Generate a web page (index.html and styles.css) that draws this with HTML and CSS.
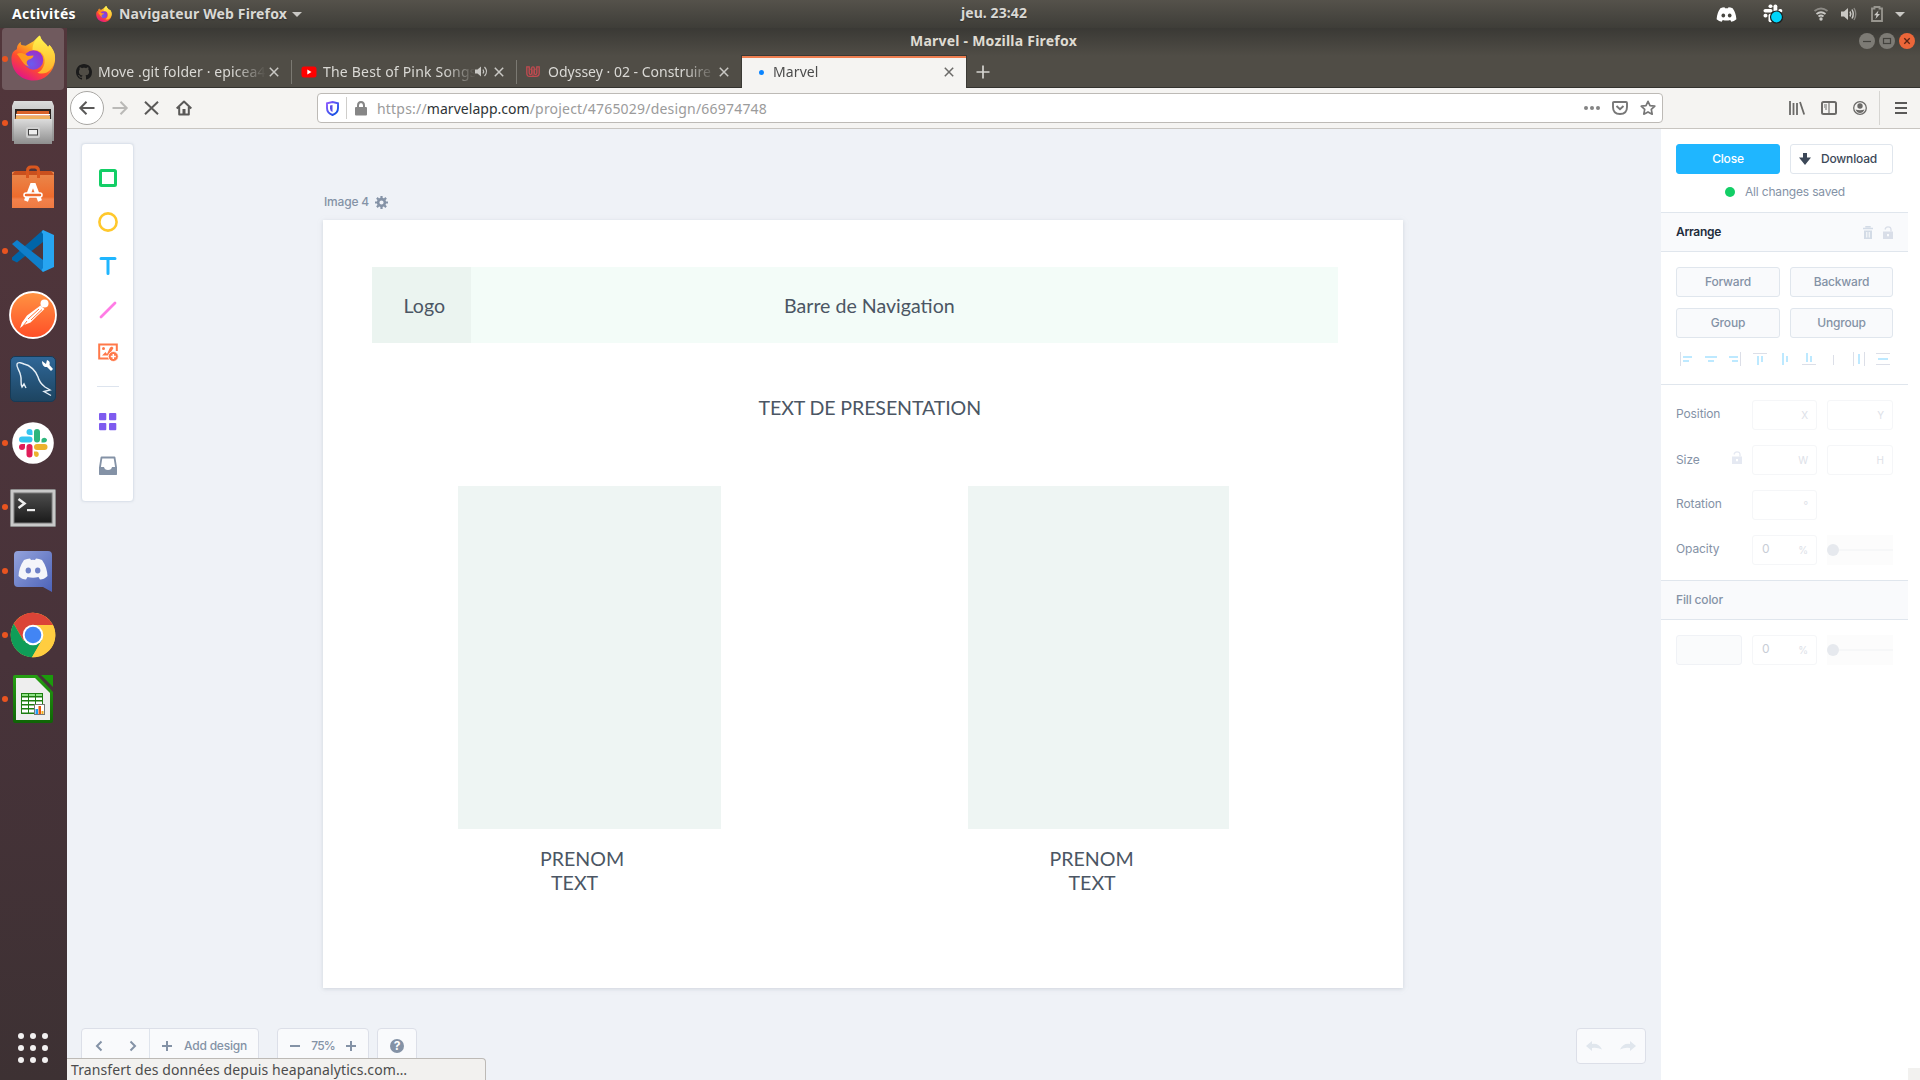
FILE: index.html
```html
<!DOCTYPE html>
<html lang="fr">
<head>
<meta charset="utf-8">
<title>Marvel</title>
<link rel="stylesheet" href="styles.css">
</head>
<body>
<svg class="defs" width="0" height="0">
  <defs>
    <linearGradient id="ffBody" x1=".85" y1=".1" x2=".3" y2="1"><stop offset="0" stop-color="#fff44f"/><stop offset=".35" stop-color="#ffa521"/><stop offset=".65" stop-color="#ff4a2f"/><stop offset="1" stop-color="#e0148a"/></linearGradient>
    <linearGradient id="ffFlame" x1=".5" y1="0" x2=".5" y2="1"><stop offset="0" stop-color="#fff44f"/><stop offset="1" stop-color="#ffb02a"/></linearGradient>
    <radialGradient id="ffGlobe" cx=".4" cy=".7" r=".7"><stop offset="0" stop-color="#6a5bf0"/><stop offset="1" stop-color="#9b30c8"/></radialGradient>
    <linearGradient id="metal" x1="0" y1="0" x2="0" y2="1"><stop offset="0" stop-color="#dcdcdc"/><stop offset="1" stop-color="#8e8e8e"/></linearGradient>
    <linearGradient id="bag" x1="0" y1="0" x2="0" y2="1"><stop offset="0" stop-color="#e98a4e"/><stop offset=".7" stop-color="#ee6b2d"/><stop offset=".76" stop-color="#f3814b"/><stop offset="1" stop-color="#ef7a42"/></linearGradient>
    <linearGradient id="pm" x1="0" y1="0" x2="0" y2="1"><stop offset="0" stop-color="#ff9443"/><stop offset="1" stop-color="#ff4e27"/></linearGradient>
    <linearGradient id="my" x1="0" y1="0" x2="0" y2="1"><stop offset="0" stop-color="#2f6798"/><stop offset="1" stop-color="#1d4460"/></linearGradient>
    <linearGradient id="term" x1="0" y1="0" x2="0" y2="1"><stop offset="0" stop-color="#4c4c4c"/><stop offset="1" stop-color="#1b1b1b"/></linearGradient>
    <linearGradient id="disc" x1="0" y1="0" x2="1" y2="1"><stop offset="0" stop-color="#94a3dc"/><stop offset="1" stop-color="#4c62b8"/></linearGradient>
    <linearGradient id="calc" x1="0" y1="0" x2="0" y2="1"><stop offset="0" stop-color="#26a013"/><stop offset="1" stop-color="#0f6406"/></linearGradient>
    <linearGradient id="shield" x1="0" y1="0" x2="1" y2="1"><stop offset="0" stop-color="#9059ff"/><stop offset="1" stop-color="#0250e0"/></linearGradient>
    <symbol id="firefox" viewBox="0 0 46 46">
      <path d="M6 14C6 11 7 9 10 6.500C9.500 9 10.500 10 12 10L15 10.500L23 6L28 1C29 0 29.500 0 30 1C31 6 36 8 38 12C38.500 10.500 39 10 39.500 10C44 15 45.500 20 45 25C44 38 34 46 23 46C10 46 .5 36 .5 24C.5 19 2 15.500 6 14Z" fill="url(#ffBody)"/>
      <path d="M22 15C22 8 25 4 29.500 0C31 6 36 8 38 12C38.500 10.500 39 10 39.500 10C44 15 45.500 20 45 25C43 36 35 41 27 38C36 34 37 20 29 16C26 14 24 16 22 15Z" fill="url(#ffFlame)"/>
      <circle cx="23" cy="25" r="10" fill="url(#ffGlobe)"/>
      <path d="M6 19C9 17 14 18 17 21L23 20.500C23 23 20 24 17.500 25C15 27 16 30 19 32C12 31 11 24 6 19Z" fill="#ff9a1e"/>
    </symbol>
    <symbol id="discordFace" viewBox="0 0 30 22">
      <path d="M6 2Q9 .5 12 .5L13 2Q15 1.700 17 2L18 .5Q21 .5 24 2Q29 9 29.500 18Q26 21.500 22 21.500L20.500 19Q15 20.500 9.500 19L8 21.500Q4 21.500.5 18Q1 9 6 2Z" fill="currentColor"/>
      <g fill="var(--eye)"><ellipse cx="10.300" cy="12.500" rx="2.700" ry="2.900"/><ellipse cx="19.700" cy="12.500" rx="2.700" ry="2.900"/></g>
    </symbol>
    <symbol id="x" viewBox="0 0 10 10"><path d="M.8.8L9.200 9.200M9.200.8L.8 9.200" stroke="currentColor" stroke-width="1.500" fill="none"/></symbol>
    <symbol id="lockOpen" viewBox="0 0 10 13"><path d="M2 3.500C2.500 1.500 3.500.8 5 .8C7 .8 8 2 8 3.500V5.500" fill="none" stroke="currentColor" stroke-width="1.300"/><path fill-rule="evenodd" d="M0 5.500H10V13H0ZM4 8V10.200H6V8Z" fill="currentColor"/></symbol>
  </defs>
</svg>

<header class="topbar">
  <span class="activities">Activités</span>
  <svg class="app-icon" width="16" height="16"><use href="#firefox"/></svg>
  <span class="app-name">Navigateur Web Firefox</span>
  <svg class="caret" width="10" height="5"><path d="M0 0H10L5 5Z" fill="#c9c8c4"/></svg>
  <span class="clock">jeu. 23:42</span>
  <div class="tray">
    <svg class="tray-discord" width="21" height="15"><use href="#discordFace"/></svg>
    <svg width="20" height="20" viewBox="0 0 20 20"><g fill="#fff"><rect x="5.500" y=".5" width="4" height="3.500" rx="1.700"/><rect x="5.500" y="9.800" width="3.800" height="8.500" rx="1.800"/><rect x=".5" y="5" width="9" height="3.600" rx="1.800"/><rect x="10.500" y=".5" width="3.800" height="8" rx="1.800"/><rect x="15.300" y="5" width="4" height="3.600" rx="1.700"/><rect x=".5" y="9.800" width="4" height="3.600" rx="1.700"/></g><circle cx="13.500" cy="13" r="6" fill="#00d4fa" stroke="#1c1c1c" stroke-width="1.200"/></svg>
    <svg class="wifi" width="14" height="14" viewBox="0 0 14 14" fill="none" stroke="#c9c8c4" stroke-width="1.800"><path d="M.5 4Q7-1 13.500 4" opacity=".5"/><path d="M2.500 7Q7 3.500 11.500 7M4.500 9.500Q7 7.500 9.500 9.500"/><circle cx="7" cy="12" r="1.700" fill="#c9c8c4" stroke="none"/></svg>
    <svg class="vol" width="16" height="14" viewBox="0 0 16 14"><path d="M0 4.500H3L7 1V13L3 9.500H0Z" fill="#c9c8c4"/><path d="M9 4.500Q10.500 7 9 9.500M11 2.500Q13.500 7 11 11.500" fill="none" stroke="#c9c8c4" stroke-width="1.500"/><path d="M13 1Q16.500 7 13 13" fill="none" stroke="#c9c8c4" stroke-width="1.400" opacity=".5"/></svg>
    <svg class="batt" width="12" height="16" viewBox="0 0 12 16"><path d="M3.500 2.500V1H8.500V2.500H11V15H1V2.500Z" fill="none" stroke="#98968f" stroke-width="1.800"/><path d="M7.500 4.500L3 9.300H5.500L4.500 13L9 8H6.500Z" fill="#c9c8c4"/></svg>
    <svg class="down" width="10" height="5"><path d="M0 0H10L5 5Z" fill="#c9c8c4"/></svg>
  </div>
</header>

<div class="desktop">
  <nav class="dock">
    <div class="slot active running"><svg width="45" height="46"><use href="#firefox"/></svg></div>
    <div class="slot running"><svg width="42" height="44" viewBox="0 0 42 44"><path d="M2 0H40L42 5V40H0V5Z" fill="url(#metal)"/><rect x="3" y="8" width="36" height="14" fill="#2b2320"/><path d="M5 10H37V20H3Z" fill="#d9622a"/><rect x="4" y="13" width="34" height="1.500" fill="#fff"/><rect x="4" y="15" width="34" height="3" fill="#f0b060"/><path d="M2 18H40V43H2Z" fill="url(#metal)"/><rect x="14" y="26" width="14" height="11" rx="2" fill="#cfcfcf"/><rect x="16.500" y="28.500" width="9" height="5.500" fill="#eee" stroke="#444"/></svg></div>
    <div class="slot"><svg width="42" height="44" viewBox="0 0 42 44"><path d="M0 7L4 6V10H38V6L42 7V43H0Z" fill="url(#bag)"/><path d="M0 10L3 6H39L42 10Z" fill="#c9501e"/><path d="M15.500 13V6Q15.500 2 19 2H23Q26.500 2 26.500 6V13" fill="none" stroke="#d9571f" stroke-width="3"/><path d="M14 36L20 20H22L28 36" fill="none" stroke="#fff" stroke-width="4.200"/><rect x="12" y="28" width="18" height="4" rx="2" fill="#ef6b2d" stroke="#fff" stroke-width="1.500"/></svg></div>
    <div class="slot running"><svg width="42" height="42" viewBox="0 0 42 42"><path d="M0 27.500L31 0V12L5 32.500L0 30Z" fill="#0065a9"/><path d="M0 14L5 10L31 30V42Z" fill="#0f7fcb"/><path d="M31 0L42 5V37L31 42L29.500 40L31 38V4L29.500 2Z" fill="#27a5f1"/></svg></div>
    <div class="slot"><svg width="48" height="48" viewBox="0 0 48 48"><circle cx="24" cy="24" r="23" fill="url(#pm)" stroke="#fff" stroke-width="1.800"/><circle cx="35.500" cy="12.500" r="4" fill="#fff"/><path d="M31.500 14.500L35.500 18L28 25L21.500 31.500L15 34L11 37L13 31.500L18 24.500Z" fill="#fff"/><path d="M30 18L19 28M33 18.500L22 29M18 30L14 35" stroke="#ff7339" stroke-width="1"/></svg></div>
    <div class="slot"><svg width="46" height="46" viewBox="0 0 46 46"><rect x=".5" y=".5" width="45" height="45" rx="4.500" fill="url(#my)" stroke="#173a56"/><path d="M16 32L14 28L12 31C10 27 12 24 10.500 19C9.500 14 6 11 7 8C8 5.500 12 7 14 8C20 9 26 15 28 21C29 25 31 28 35 31L40 34L34 35.500L41 39.500" fill="none" stroke="#e6eff6" stroke-width="1.400"/><path d="M32 5L36 8L37 4C40 5 40 7 39.500 9L43 13L41 15L37 11C34 11.500 32 9 32 5Z" fill="#fff"/></svg></div>
    <div class="slot running"><svg width="42" height="42" viewBox="0 0 42 42"><circle cx="21" cy="21" r="20.800" fill="#fff"/><g fill="#36c5f0"><path d="M17.500 7A3 3 0 0 0 17.500 13H20.500V10A3 3 0 0 0 17.500 7Z"/><rect x="7" y="14.500" width="13.500" height="6" rx="3"/></g><g fill="#2eb67d"><rect x="22" y="7" width="6" height="13.500" rx="3"/><path d="M35 17.500A3 3 0 0 0 29.500 17.500V20.500H32A3 3 0 0 0 35 17.500Z"/></g><g fill="#ecb22e"><rect x="22" y="22" width="13.500" height="6" rx="3"/><path d="M25 35A3 3 0 0 0 25 29.500H22V32A3 3 0 0 0 25 35Z"/></g><g fill="#e01e5a"><rect x="14.500" y="22" width="6" height="13.500" rx="3"/><path d="M7 25A3 3 0 0 0 13 25V22H10A3 3 0 0 0 7 25Z"/></g></svg></div>
    <div class="slot running term"><svg width="46" height="38" viewBox="0 0 46 38"><rect width="46" height="38" rx="1.500" fill="#8d8d8d"/><rect x="1" y="1" width="44" height="36" fill="#c9c9c9"/><rect x="3.500" y="3.500" width="39" height="31" fill="#777"/><rect x="4.500" y="4.500" width="37" height="29" fill="url(#term)"/><path d="M8.500 10L14.500 14.500L8.500 19" fill="none" stroke="#eee" stroke-width="2.500"/><rect x="17" y="20" width="8" height="2.200" fill="#eee"/></svg></div>
    <div class="slot running"><svg width="38" height="41" viewBox="0 0 38 41"><path d="M4 0H34Q38 0 38 4V41L29 36H4Q0 36 0 32V4Q0 0 4 0Z" fill="url(#disc)"/><svg class="dock-face" x="4" y="7" width="30" height="22"><use href="#discordFace"/></svg></svg></div>
    <div class="slot running"><svg width="46" height="46" viewBox="0 0 46 46"><circle cx="23" cy="23" r="22.300" fill="#ffcd40"/><path d="M3.700 11.800A22.300 22.300 0 0 1 43 13H23L13.400 28.500Z" fill="#db4437"/><path d="M3.700 11.800A22.300 22.300 0 0 0 22 45.300L32 28L13.400 28.500Z" fill="#0f9d58"/><path d="M32 28L22 45.300A22.300 22.300 0 0 0 43 13H23Z" fill="#ffcd40"/><circle cx="23" cy="23" r="10.300" fill="#fff"/><circle cx="23" cy="23" r="8.300" fill="#4285f4"/></svg></div>
    <div class="slot running"><svg width="40" height="48" viewBox="0 0 40 48"><path d="M0 2Q0 0 2 0H24L40 17V46Q40 48 38 48H2Q0 48 0 46Z" fill="url(#calc)"/><path d="M28 0H40V12Z" fill="#1b9a0c"/><path d="M3 3H22L37 18V45H3Z" fill="#eee"/><rect x="8" y="18" width="22" height="21" fill="#1d7d10"/><g fill="#8fe386"><path d="M9 19H15V21H9ZM16 19H22V21H16ZM23 19H29V21H23Z"/></g><g fill="#fff"><path d="M9 22.500H15V25H9ZM16 22.500H22V25H16ZM23 22.500H29V25H23ZM9 26.500H15V29H9ZM16 26.500H22V29H16ZM23 26.500H29V29H23ZM9 30.500H15V33H9ZM16 30.500H22V33H16ZM9 34.500H15V37.500H9ZM16 34.500H22V37.500H16Z"/></g><rect x="21.500" y="29.500" width="10" height="10" fill="#fff" stroke="#777"/><rect x="22.500" y="34" width="2.500" height="5" fill="#1d99f3"/><rect x="25.500" y="31" width="2.500" height="8" fill="#e8590c"/><rect x="28.500" y="36" width="2" height="3" fill="#f0b020"/></svg></div>
    <svg class="apps" width="30" height="30" fill="#f3f1f1"><circle cx="3" cy="3" r="3"/><circle cx="15" cy="3" r="3"/><circle cx="27" cy="3" r="3"/><circle cx="3" cy="15" r="3"/><circle cx="15" cy="15" r="3"/><circle cx="27" cy="15" r="3"/><circle cx="3" cy="27" r="3"/><circle cx="15" cy="27" r="3"/><circle cx="27" cy="27" r="3"/></svg>
  </nav>

  <div class="window">
    <div class="titlebar">
      <span>Marvel - Mozilla Firefox</span>
      <div class="winbtns">
        <svg width="16" height="16"><circle cx="8" cy="8" r="8" fill="#7d7b75"/><path d="M4 8.500H12" stroke="#43423d" stroke-width="1.200"/></svg>
        <svg width="16" height="16"><circle cx="8" cy="8" r="8" fill="#7d7b75"/><rect x="4.500" y="5.500" width="7" height="5" fill="none" stroke="#43423d" stroke-width="1.200"/></svg>
        <svg width="16" height="16"><circle cx="8" cy="8" r="8" fill="#ec6639"/><path d="M5.300 5.300L10.700 10.700M10.700 5.300L5.300 10.700" stroke="#5a2414" stroke-width="1.300"/></svg>
      </div>
    </div>

    <div class="tabs">
      <div class="tab">
        <svg width="16" height="16" viewBox="0 0 16 16"><path fill="#1b1b1b" d="M8 0C3.580 0 0 3.580 0 8c0 3.540 2.290 6.530 5.470 7.590.4.070.55-.17.55-.38 0-.19-.01-.82-.01-1.490-2.010.37-2.530-.49-2.690-.94-.09-.23-.48-.94-.82-1.130-.28-.15-.68-.52-.01-.53.63-.01 1.080.58 1.230.82.72 1.210 1.870.87 2.330.66.07-.52.28-.87.51-1.070-1.780-.2-3.640-.89-3.640-3.950 0-.87.31-1.590.82-2.150-.08-.2-.36-1.020.08-2.120 0 0 .67-.21 2.200.82.64-.18 1.320-.27 2-.27s1.360.09 2 .27c1.530-1.040 2.200-.82 2.200-.82.44 1.100.16 1.920.08 2.120.51.56.82 1.270.82 2.150 0 3.070-1.870 3.750-3.650 3.950.29.25.54.73.54 1.480 0 1.070-.01 1.930-.01 2.200 0 .21.15.46.55.38A8.010 8.010 0 0 0 16 8c0-4.420-3.580-8-8-8z"/></svg>
        <span class="label">Move .git folder · epicea4</span>
        <svg class="x" width="10" height="10"><use href="#x"/></svg>
      </div>
      <div class="tab">
        <svg width="16" height="16" viewBox="0 0 16 16"><rect x=".5" y="2.500" width="15" height="11" rx="2.500" fill="#f00"/><path d="M6.300 5.500L10.500 8L6.300 10.500Z" fill="#fff"/></svg>
        <span class="label t-yt">The Best of Pink Songs</span>
        <svg class="sound" width="13" height="11" viewBox="0 0 13 11"><path d="M0 3.500H2.500L6 .5V10.500L2.500 7.500H0Z" fill="#c9c8c4"/><path d="M8 3.500Q9.300 5.500 8 7.500M9.500 1Q13.500 5.500 9.500 10" fill="none" stroke="#c9c8c4" stroke-width="1.200"/></svg>
        <svg class="x" width="10" height="10"><use href="#x"/></svg>
      </div>
      <div class="tab odyssey">
        <svg width="14" height="11" viewBox="0 0 14 11" fill="none" stroke="#c24a50" stroke-width="1.300"><path d="M.8.8H3.200V7Q3.200 8.500 4.500 8.500Q5.700 8.500 5.700 7V2.200Q5.700.8 7 .8Q8.300.8 8.300 2.200V7Q8.300 8.500 9.500 8.500Q10.800 8.500 10.800 7V.8H13.200V7Q13.200 10.400 10 10.400H3.500Q.8 10.400.8 7Z"/><path d="M7 3.500V10M3.200 2.500L5.700 4M8.300 4L10.800 2.500" opacity=".7"/></svg>
        <span class="label t-ody">Odyssey · 02 - Construire</span>
        <svg class="x" width="10" height="10"><use href="#x"/></svg>
      </div>
      <div class="tab current">
        <i class="dot"></i>
        <span class="label">Marvel</span>
        <svg class="x" width="10" height="10"><use href="#x"/></svg>
      </div>
      <svg class="plus" width="14" height="14"><path d="M7 .5V13.500M.5 7H13.500" stroke="#d5d4d0" stroke-width="1.700"/></svg>
    </div>

    <div class="toolbar">
      <span class="back"><svg width="16" height="14" viewBox="0 0 16 14"><path d="M15.500 7H1.500M7.500 .8L1.300 7L7.500 13.200" fill="none" stroke="#5a5958" stroke-width="2"/></svg></span>
      <svg class="fwd" width="16" height="14" viewBox="0 0 16 14"><path d="M.5 7H14.500M8.500 .8L14.700 7L8.500 13.200" fill="none" stroke="#bab9b7" stroke-width="2"/></svg>
      <svg class="stop" width="15" height="14" viewBox="0 0 15 14"><path d="M1 .8L14 13.200M14 .8L1 13.200" stroke="#5a5958" stroke-width="2"/></svg>
      <svg class="home" width="16" height="16" viewBox="0 0 16 16"><path d="M.7 8.500L8 1.500L15.300 8.500M3.200 7V14.500H12.800V7" fill="none" stroke="#5a5958" stroke-width="2" stroke-linejoin="round"/><path d="M6.500 9H9.500V14H6.500Z" fill="#5a5958"/></svg>
      <div class="urlbar">
        <svg width="13" height="15" viewBox="0 0 13 15"><path d="M6.500 1L12 2.200V7Q12 12 6.500 14Q1 12 1 7V2.200Z" fill="none" stroke="url(#shield)" stroke-width="1.900"/><path d="M6.500 4L4 4.500V7.500Q4 10 6.500 11Z" fill="#5a4fe8"/></svg>
        <i class="vr"></i>
        <svg class="lock" width="12" height="15" viewBox="0 0 12 15"><path d="M3 7V4.500Q3 1 6 1Q9 1 9 4.500V7" fill="none" stroke="#868686" stroke-width="2"/><rect y="6" width="12" height="8.500" rx="1" fill="#868686"/></svg>
        <span class="url">https://<b>marvelapp.com</b>/project/4765029/design/66974748</span>
        <svg class="dots" width="16" height="4" fill="#848484"><circle cx="2" cy="2" r="2"/><circle cx="8" cy="2" r="2"/><circle cx="14" cy="2" r="2"/></svg>
        <svg class="pocket" width="16" height="14" viewBox="0 0 16 14"><path d="M2 1H14Q15 1 15 2V6Q15 13 8 13Q1 13 1 6V2Q1 1 2 1Z" fill="none" stroke="#777" stroke-width="1.900"/><path d="M4.500 5L8 8.300L11.500 5" fill="none" stroke="#777" stroke-width="1.900"/></svg>
        <svg width="16" height="16" viewBox="0 0 16 16"><path d="M8 1.300L10 5.600L14.800 6.200L11.300 9.400L12.200 14.200L8 11.900L3.800 14.200L4.700 9.400L1.200 6.200L6 5.600Z" fill="none" stroke="#777" stroke-width="1.700" stroke-linejoin="round"/></svg>
      </div>
      <div class="tools">
        <svg width="16" height="14" viewBox="0 0 16 14" stroke="#6b6a68" stroke-width="1.800"><path d="M1 0V14M4.500 2V14M8 2V14M11 1L15.200 13.500"/></svg>
        <svg width="16" height="14" viewBox="0 0 16 14"><rect x="1" y="1" width="14" height="12" rx="1.500" fill="none" stroke="#6b6a68" stroke-width="2"/><path d="M8 1V13M3 4H6M3 6H6M4 8H6" stroke="#6b6a68" stroke-width="1.100"/></svg>
        <svg width="14" height="14" viewBox="0 0 14 14"><circle cx="7" cy="7" r="6.300" fill="none" stroke="#6b6a68" stroke-width="1.300"/><circle cx="7" cy="5" r="2.700" fill="#6b6a68"/><path d="M2.500 8.500Q7 10 11.500 8.500Q10 12 7 12Q4 12 2.500 8.500Z" fill="#6b6a68"/></svg>
        <i class="vr"></i>
        <svg width="12" height="12"><path d="M0 1H12M0 6H12M0 11H12" stroke="#5a5958" stroke-width="2"/></svg>
      </div>
    </div>

    <div class="app">
      <main class="stage">
        <div class="toolbox">
          <svg width="20" height="20"><rect x="2.500" y="2.500" width="15" height="15" rx="1" fill="none" stroke="#13ce66" stroke-width="3"/></svg>
          <svg width="20" height="20"><circle cx="10" cy="10" r="8.600" fill="none" stroke="#ffc82c" stroke-width="2.600"/></svg>
          <svg width="20" height="20"><path d="M3 2.500H17M10 2.500V17.500" fill="none" stroke="#1fb6ff" stroke-width="3" stroke-linecap="round"/></svg>
          <svg width="20" height="20"><path d="M3 17L17 3" stroke="#ff7ce5" stroke-width="2.800" stroke-linecap="round"/></svg>
          <svg class="pic" width="20" height="20"><path d="M11 16.500H1.200V2.500H18.800V9" fill="none" stroke="#ff7849" stroke-width="2"/><path d="M4 13.500L7.500 10L9 12L12 5.500L14 4.500L15.500 6L11 13.500Z" fill="#ff7849"/><circle cx="5.500" cy="6.500" r="1.500" fill="#ff7849"/><circle cx="15.300" cy="14.500" r="5" fill="#ff7849" stroke="#fff" stroke-width=".8"/><path d="M15.300 12V17M12.800 14.500H17.800" stroke="#fff" stroke-width="1.500"/></svg>
          <i class="hr"></i>
          <svg width="20" height="20" fill="#7e5bef"><rect x="1" y="2" width="7.300" height="7.300" rx="1"/><rect x="11" y="2" width="7.300" height="7.300" rx="1"/><rect x="1" y="12" width="7.300" height="7.300" rx="1"/><rect x="11" y="12" width="7.300" height="7.300" rx="1"/></svg>
          <svg class="inbox" width="20" height="20"><path d="M3.500 1.500H16.500L18 11V18H2V11Z" fill="none" stroke="#8492a6" stroke-width="1.800" stroke-linejoin="round"/><path d="M1 11H6Q6.500 14 10 14Q13.500 14 14 11H19V17.500Q19 19 17.500 19H2.500Q1 19 1 17.500Z" fill="#8492a6"/></svg>
        </div>

        <div class="artlabel">Image 4
          <svg width="13" height="13" viewBox="0 0 13 13"><circle cx="6.500" cy="6.500" r="3.400" fill="none" stroke="#8492a6" stroke-width="2.600"/><g stroke="#8492a6" stroke-width="2.200"><path d="M6.500 0V2.500M6.500 10.500V13M0 6.500H2.500M10.500 6.500H13M1.900 1.900L3.500 3.500M9.500 9.500L11.100 11.100M11.100 1.900L9.500 3.500M3.500 9.500L1.900 11.100"/></g></svg>
        </div>
        <div class="artboard">
          <div class="shape nav"></div>
          <div class="shape logo"></div>
          <div class="shape card-a"></div>
          <div class="shape card-b"></div>
          <span class="txt t1">Logo</span>
          <span class="txt t2">Barre de Navigation</span>
          <span class="txt t3">TEXT DE PRESENTATION</span>
          <span class="txt t4">PRENOM</span>
          <span class="txt t5">TEXT</span>
          <span class="txt t6">PRENOM</span>
          <span class="txt t7">TEXT</span>
        </div>

        <div class="bottombar">
          <div class="group pages">
            <div class="arrows">
              <svg width="8" height="12"><path d="M6.500 1.500L2 6L6.500 10.500" fill="none" stroke="#8492a6" stroke-width="2"/></svg>
              <svg width="8" height="12"><path d="M1.500 1.500L6 6L1.500 10.500" fill="none" stroke="#8492a6" stroke-width="2"/></svg>
            </div>
            <div class="add"><svg width="10" height="10"><path d="M5 0V10M0 5H10" stroke="#8492a6" stroke-width="2"/></svg><span>Add design</span></div>
          </div>
          <div class="group zoom">
            <svg width="10" height="10"><path d="M0 5H10" stroke="#8492a6" stroke-width="2"/></svg>
            <span>75%</span>
            <svg width="10" height="10"><path d="M5 0V10M0 5H10" stroke="#8492a6" stroke-width="2"/></svg>
          </div>
          <div class="group help"><span class="q">?</span></div>
          <div class="group undo">
            <svg width="16" height="10"><path d="M0 5L6 0V3Q13 2 16 8.500Q11 6 6 7V10Z" fill="#e0e6ed"/></svg>
            <svg width="16" height="10"><path d="M16 5L10 0V3Q3 2 0 8.500Q5 6 10 7V10Z" fill="#e0e6ed"/></svg>
          </div>
        </div>
      </main>

      <aside class="panel">
        <div class="inner">
          <section class="actions">
            <button class="close">Close</button>
            <button class="download"><svg width="12" height="12"><path d="M4 0H8V4.500H12L6 12L0 4.500H4Z" fill="#3c4858"/></svg>Download</button>
            <p class="saved"><i></i>All changes saved</p>
          </section>
          <h2 class="dark">Arrange
            <svg width="10" height="13" viewBox="0 0 10 13"><path d="M3 1.500V.7H7V1.500M0 2.500H10" fill="none" stroke="#d3dbe6" stroke-width="1.400"/><path fill-rule="evenodd" d="M1 4.500H9V13H1ZM3.200 6V11.500H4.300V6ZM5.700 6V11.500H6.800V6Z" fill="#d3dbe6"/></svg>
            <svg class="lk" width="10" height="13"><use href="#lockOpen"/></svg>
          </h2>
          <section class="order">
            <button>Forward</button><button>Backward</button>
            <button>Group</button><button>Ungroup</button>
            <svg class="align" width="217" height="18">
              <path fill="#bde9ff" d="M7 6h9v2h-9zM7 10h6v2h-6zM29 6h12v2h-12zM32 10h6v2h-6zM53 6h9v2h-9zM56 10h6v2h-6zM81 6h2v9h-2zM85 6h2v6h-2zM106 3h2v12h-2zM110 6h2v6h-2zM130 3h2v9h-2zM134 6h2v6h-2zM182 4h2v10h-2zM202 8h10v2h-10z"/>
              <path fill="#dcdfe8" d="M4 2h1v14h-1zM64 2h1v14h-1zM77 3h14v1h-14zM126 14h14v1h-14zM157 5h1v10h-1zM177 2h1v14h-1zM188 2h1v14h-1zM200 3h14v1h-14zM200 14h14v1h-14z"/>
            </svg>
          </section>
          <section class="fields">
            <div class="row"><label>Position</label><div class="in"><em>X</em></div><div class="in"><em>Y</em></div></div>
            <div class="row"><label class="size">Size</label><svg class="lk" width="10" height="13"><use href="#lockOpen"/></svg><div class="in"><em>W</em></div><div class="in"><em>H</em></div></div>
            <div class="row"><label>Rotation</label><div class="in"><em>°</em></div></div>
            <div class="row"><label>Opacity</label><div class="in"><span>0</span><em>%</em></div><div class="slider"></div></div>
          </section>
          <h2>Fill color</h2>
          <section class="fill"><div class="swatch"></div><div class="in"><span>0</span><em>%</em></div><div class="slider"></div></section>
        </div>
        <i class="corner"></i>
      </aside>
      <div class="status">Transfert des données depuis heapanalytics.com…</div>
    </div>
  </div>
</div>
</body>
</html>
```
FILE: styles.css
```css
* { box-sizing: border-box; }
body {
  margin: 0;
  width: 1920px;
  height: 1080px;
  overflow: hidden;
  display: flex;
  flex-direction: column;
  font: 14px/20px "Noto Sans", sans-serif;
}
svg { display: block; flex: none; overflow: visible; }
.defs { position: absolute; }
button, h2, p { margin: 0; font: inherit; }

/* system bar */
.topbar {
  position: relative;
  flex: none;
  height: 28px;
  display: flex;
  align-items: center;
  padding: 0 13px 0 12px;
  background: linear-gradient(#55524b, #3e3d38);
  color: #d9d8d4;
  font-weight: 700;
  text-shadow: 0 1px 1px #2228;
}
.activities { width: 84px; color: #fff; letter-spacing: .35px; }
.app-name { margin-left: 7px; letter-spacing: .14px; }
.caret { margin-left: 5px; }
.clock { position: absolute; left: 961px; top: 3px; letter-spacing: .08px; }
.tray { margin-left: auto; display: flex; align-items: center; }
.tray-discord { color: #fff; margin-right: 26px; --eye: #47453f; }
.wifi { margin-left: 31px; }
.vol { margin-left: 13px; }
.batt { margin-left: 14px; }
.down { margin-left: 12px; margin-right: 2px; }

.desktop { flex: 1; display: flex; min-height: 0; }

/* dock */
.dock {
  width: 67px;
  display: flex;
  flex-direction: column;
  align-items: center;
  padding-right: 1px;
  background: linear-gradient(#52363b, #48333a 60%, #3d3133);
}
.slot {
  position: relative;
  width: 62px;
  height: 62px;
  margin-bottom: 2px;
  flex: none;
  display: flex;
  align-items: center;
  justify-content: center;
  border-radius: 4px;
}
.slot.active { background: #705a5e; padding-bottom: 2px; }
.slot.term { padding-top: 2px; }
.slot.running::before {
  content: "";
  position: absolute;
  left: 0;
  top: 28px;
  width: 6px;
  height: 6px;
  border-radius: 50%;
  background: #e95420;
}
.dock-face { color: #f4f5fa; --eye: #6f82c8; }
.apps { margin: auto 0 17px; }

/* window chrome */
.window { flex: 1; display: flex; flex-direction: column; min-width: 0; }
.titlebar {
  height: 28px;
  display: flex;
  align-items: center;
  padding: 0 5px 2px 843px;
  background: linear-gradient(#3a3935, #504d46);
  color: #dfdbd2;
  font-weight: 700;
  letter-spacing: .225px;
}
.winbtns { margin-left: auto; display: flex; gap: 4px; }

.tabs {
  height: 32px;
  display: flex;
  background: #504d46;
  border-bottom: 1px solid #33322e;
  color: #dad9d5;
}
.tab {
  width: 225px;
  height: 31px;
  display: flex;
  align-items: center;
  padding: 1px 13px 1px 9px;
  position: relative;
}
.tab:not(.current)::after {
  content: "";
  position: absolute;
  right: 0;
  top: 4px;
  width: 1px;
  height: 24px;
  background: #7b7972;
}
.tab.odyssey::after { display: none; }
.tab .label {
  flex: 1;
  min-width: 0;
  margin-left: 6px;
  white-space: nowrap;
  letter-spacing: .1px;
  -webkit-mask-image: linear-gradient(90deg, #000 calc(100% - 32px), transparent);
  mask-image: linear-gradient(90deg, #000 calc(100% - 32px), transparent);
}
.tab .label.t-yt { letter-spacing: .2px; }
.tab .label.t-ody { margin-left: 8px; letter-spacing: 0; }
.tab .x { margin-left: 3px; color: #c9c8c4; }
.tab .sound { margin-left: -1px; }
.tab .sound + .x { margin-left: 6px; }
.tab.current {
  width: 224px;
  height: 32px;
  background: #f5f4f2;
  border-top: 2px solid #ee7e50;
  color: #4c4c4c;
  padding: 0 12px 2px 17px;
  box-shadow: 0 0 0 1px #3a3934;
  clip-path: inset(-1px -1px 0 -1px);
}
.tab.current .x { color: #6b6a68; }
.tab.current .label { margin-left: 9px; }
.dot { width: 5px; height: 5px; border-radius: 50%; background: #0a84ff; }
.plus { margin: 9px 0 0 10px; }

.toolbar {
  height: 41px;
  display: flex;
  align-items: center;
  padding: 0 13px 0 3px;
  background: #f5f4f2;
  border-bottom: 1px solid #c8c5c1;
}
.back {
  width: 34px;
  height: 34px;
  border: 1px solid #a9a7a4;
  border-radius: 50%;
  background: #fff;
  display: grid;
  place-items: center;
}
.fwd { margin-left: 8px; }
.stop { margin-left: 16px; }
.home { margin-left: 17px; }
.urlbar {
  width: 1346px;
  height: 30px;
  margin-left: 125px;
  display: flex;
  align-items: center;
  padding: 0 6px 0 8px;
  background: #fff;
  border: 1px solid #bdbab6;
  border-radius: 4px;
}
.vr { width: 1px; height: 22px; margin: 0 8px 0 7px; background: #cfcecb; }
.url { margin-left: 10px; padding-top: 1px; color: #9b9b9b; letter-spacing: .2px; white-space: nowrap; }
.url b { font-weight: 400; color: #2e3436; letter-spacing: .03px; }
.dots { margin-left: auto; }
.pocket { margin: 0 12px; }
.tools { margin-left: auto; display: flex; align-items: center; }
.tools svg + svg { margin-left: 16px; }
.tools .vr { height: 34px; margin: 0 15px 0 12px; background: #d6d5d2; }

/* design editor */
.app {
  position: relative;
  flex: 1;
  min-height: 0;
  display: flex;
  font: 500 12px/16px Inter, sans-serif;
  color: #8492a6;
}
.stage {
  position: relative;
  width: 1594px;
  display: flex;
  flex-direction: column;
  padding: 14px 15px 16px 14px;
  background: #eff2f7;
}
.toolbox {
  width: 53px;
  height: 359px;
  display: flex;
  flex-direction: column;
  align-items: center;
  gap: 24px;
  padding-top: 24px;
  background: #fff;
  border: 1px solid #dde3ec;
  border-radius: 4px;
  box-shadow: 0 0 2px #c8cfda80;
}
.toolbox .pic { margin-top: -2px; }
.toolbox .inbox { margin-top: 1px; }
.toolbox .hr { width: 22px; height: 1px; background: #dde4ee; }
.artlabel {
  position: absolute;
  left: 257px;
  top: 65px;
  display: flex;
  align-items: center;
  gap: 6px;
  letter-spacing: -.19px;
}
.artboard {
  position: absolute;
  left: 256px;
  top: 91px;
  width: 1080px;
  height: 768px;
  background: #fff;
  box-shadow: 0 1px 4px #b9c0ca99;
}
.shape { position: absolute; background: #eef5f3; }
.nav { left: 49px; top: 47px; width: 966px; height: 76px; background: #f3fcf8; }
.logo { left: 49px; top: 47px; width: 99px; height: 76px; background: #ebf4f0; }
.card-a { left: 135px; top: 266px; width: 263px; height: 343px; }
.card-b { left: 645px; top: 266px; width: 261px; height: 343px; }
.txt {
  position: absolute;
  font: 400 19.6px/24px Lato, sans-serif;
  letter-spacing: 0;
  color: #4b5664;
  white-space: nowrap;
}
.t1 { left: 80.500px; top: 74px; }
.t2 { left: 461px; top: 74px; }
.t3 { left: 435.500px; top: 176px; letter-spacing: -.12px; }
.t4 { left: 217px; top: 627px; }
.t5 { left: 228px; top: 651px; }
.t6 { left: 726.500px; top: 627px; }
.t7 { left: 745.500px; top: 651px; }

.bottombar { margin-top: auto; display: flex; letter-spacing: -.2px; }
.group {
  height: 36px;
  display: flex;
  align-items: center;
  background: #f9fafc;
  border: 1px solid #dcdfe8;
  border-radius: 4px;
}
.pages { width: 178px; }
.arrows {
  width: 68px;
  height: 100%;
  display: flex;
  align-items: center;
  justify-content: space-between;
  padding: 0 12px 0 13px;
  border-right: 1px solid #dfe4ec;
}
.add { display: flex; align-items: center; padding-left: 12px; gap: 12px; }
.zoom { width: 92px; margin-left: 18px; justify-content: space-between; padding: 0 12px; }
.zoom span { letter-spacing: -.9px; }
.help { width: 40px; margin-left: 8px; justify-content: center; }
.q {
  width: 14px;
  height: 14px;
  border-radius: 50%;
  background: #8492a6;
  color: #fff;
  font: 700 12px/14px Inter, sans-serif;
  text-align: center;
  letter-spacing: 0;
}
.undo { width: 70px; margin-left: auto; justify-content: space-between; padding: 0 9px; }

.panel { position: relative; flex: 1; background: #fff; }
.inner { width: 247px; }
.corner { position: absolute; right: 0; bottom: 0; width: 12px; height: 12px; background: #f2f1ef; }
.actions { display: grid; grid-template-columns: 104px 103px; column-gap: 10px; padding: 15px; height: 83px; }
button {
  height: 30px;
  padding: 0;
  border: 1px solid #e0e6ed;
  border-radius: 3px;
  background: #f9fafc;
  color: #8492a6;
  letter-spacing: -.18px;
}
.actions .close { background: #1fb6ff; border-color: #1fb6ff; color: #fff; }
.actions .download {
  display: flex;
  align-items: center;
  gap: 10px;
  padding-left: 8px;
  background: #fff;
  color: #3c4858;
}
.saved {
  grid-column: 1 / 3;
  display: flex;
  align-items: center;
  gap: 10px;
  padding: 10px 0 0;
  margin-left: 49px;
  white-space: nowrap;
  font-weight: 400;
  letter-spacing: -.18px;
}
.saved i { width: 10px; height: 10px; border-radius: 50%; background: #13ce66; flex: none; }
h2 {
  height: 40px;
  display: flex;
  align-items: center;
  padding: 0 15px;
  background: #f9fafc;
  border: solid #e0e6ed;
  border-width: 1px 0;
  letter-spacing: -.15px;
}
h2.dark { color: #1f2d3d; font-weight: 600; letter-spacing: -.3px; }
h2 svg { margin-left: auto; }
h2 svg + svg { margin-left: 10px; }
.lk { color: #d9dee8; }
.order {
  display: grid;
  grid-template-columns: 104px 103px;
  gap: 10px;
  padding: 15px;
  height: 133px;
  border-bottom: 1px solid #e0e6ed;
}
.align { grid-column: 1 / 3; margin-top: 2px; }
.fields { display: grid; gap: 15px; padding: 15px; height: 195px; }
.row { display: grid; grid-template-columns: 56px 20px 65px 66px; column-gap: 0; height: 30px; }
.row label { grid-column: 1; padding-top: 6px; font-weight: 400; letter-spacing: -.1px; }
.row label.size { padding-top: 7px; }
.row .lk { grid-column: 2; margin-top: 6px; color: #e5e9f2; }
.row .in { grid-column: 3; }
.row .in + .in, .row .slider { grid-column: 4; margin-left: 10px; margin-right: -10px; }
.row > * { grid-row: 1; }
.in {
  width: auto;
  height: 30px;
  display: flex;
  align-items: center;
  padding: 0 8px 2px 9px;
  border: 1px solid #f5f6f8;
  border-radius: 3px;
  font-weight: 400;
  color: #c8cdd6;
}
.in em { margin-left: auto; font-style: normal; font-size: 10px; color: #dde1e8; padding-top: 1px; }
.slider { position: relative; height: 30px; background: linear-gradient(#f6f7f8, #f6f7f8) 0 14px / 100% 2px no-repeat #fcfcfc; }
.slider::before {
  content: "";
  position: absolute;
  left: 0;
  top: 9px;
  width: 12px;
  height: 12px;
  border-radius: 50%;
  background: #e6e9ee;
}
.fill { display: grid; grid-template-columns: 66px 65px 66px; gap: 10px; padding: 15px; }
.swatch { height: 30px; border: 1px solid #f0f2f6; border-radius: 3px; background: #fafbfc; }

/* link status overlay */
.status {
  position: absolute;
  left: 0;
  bottom: 0;
  width: 419px;
  height: 22px;
  padding-left: 4px;
  border: solid #bdbab6;
  border-width: 1px 1px 0 0;
  border-radius: 0 4px 0 0;
  background: #f2f1ef;
  color: #4c4c4c;
  font: 14px/22px "Noto Sans", sans-serif;
  letter-spacing: .1px;
}
```
